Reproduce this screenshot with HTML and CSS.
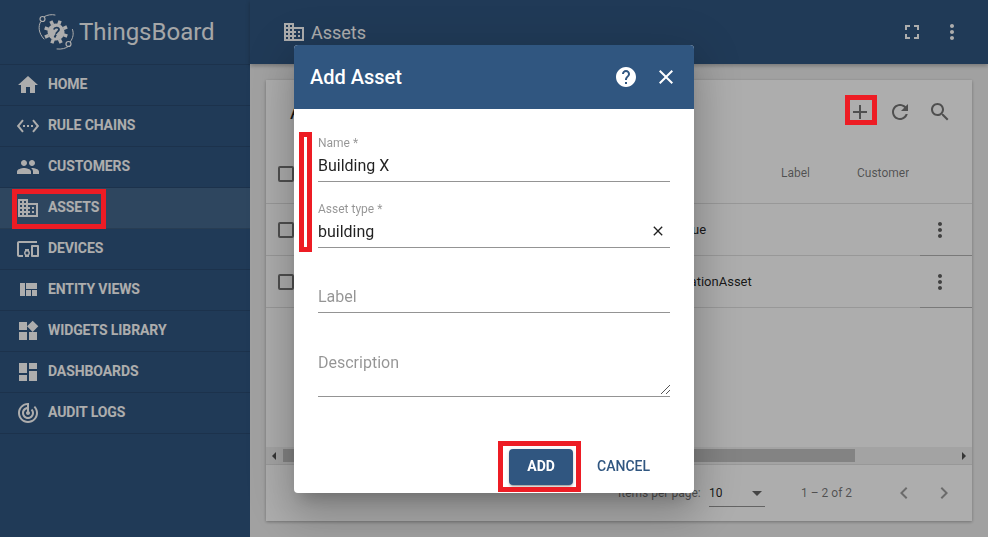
FILE: index.html
```html
<!DOCTYPE html>
<html lang="en">
<head>
<meta charset="utf-8">
<title>Assets - ThingsBoard</title>
<link rel="stylesheet" href="styles.css">
</head>
<body>
<svg class="sprite" aria-hidden="true">
  <symbol id="i-home" viewBox="0 0 24 24"><path d="M10 20v-6h4v6h5v-8h3L12 3 2 12h3v8z"/></symbol>
  <symbol id="i-rule" viewBox="0 0 24 24"><path d="M7.77 6.76L6.23 5.48.82 12l5.41 6.52 1.54-1.28L3.42 12l4.35-5.24zM7 13h2v-2H7v2zm10-2h-2v2h2v-2zm-6 2h2v-2h-2v2zm6.77-7.52l-1.54 1.28L20.58 12l-4.35 5.24 1.54 1.28L23.18 12l-5.41-6.52z"/></symbol>
  <symbol id="i-people" viewBox="0 0 24 24"><path d="M16 11c1.66 0 2.99-1.34 2.99-3S17.66 5 16 5c-1.66 0-3 1.34-3 3s1.34 3 3 3zm-8 0c1.66 0 2.99-1.34 2.99-3S9.66 5 8 5C6.34 5 5 6.34 5 8s1.34 3 3 3zm0 2c-2.33 0-7 1.17-7 3.5V19h14v-2.5c0-2.33-4.67-3.5-7-3.5zm8 0c-.29 0-.62.02-.97.05 1.16.84 1.97 1.97 1.97 3.45V19h6v-2.5c0-2.33-4.67-3.5-7-3.5z"/></symbol>
  <symbol id="i-domain" viewBox="0 0 24 24"><path d="M12 7V3H2v18h20V7H12zM6 19H4v-2h2v2zm0-4H4v-2h2v2zm0-4H4V9h2v2zm0-4H4V5h2v2zm4 12H8v-2h2v2zm0-4H8v-2h2v2zm0-4H8V9h2v2zm0-4H8V5h2v2zm10 12h-8v-2h2v-2h-2v-2h2v-2h-2V9h8v10zm-2-8h-2v2h2v-2zm0 4h-2v2h2v-2z"/></symbol>
  <symbol id="i-devices" viewBox="0 0 24 24"><path d="M3 6h18V4H3c-1.100 0-2 .9-2 2v12c0 1.100.9 2 2 2h4v-2H3V6zm10 6H9v1.780c-.61.55-1 1.330-1 2.220s.39 1.670 1 2.220V20h4v-1.780c.61-.55 1-1.340 1-2.220s-.39-1.670-1-2.220V12zm-2 5.500c-.83 0-1.500-.67-1.500-1.500s.67-1.500 1.500-1.500 1.500.67 1.500 1.500-.67 1.500-1.500 1.500zM22 8h-6c-.5 0-1 .5-1 1v10c0 .5.5 1 1 1h6c.5 0 1-.5 1-1V9c0-.5-.5-1-1-1zm-1 10h-4v-8h4v8z"/></symbol>
  <symbol id="i-quilt" viewBox="0 0 24 24"><path d="M10 18h5v-6h-5v6zm-6 0h5V5H4v13zm12 0h5v-6h-5v6zM10 5v6h11V5H10z"/></symbol>
  <symbol id="i-widgets" viewBox="0 0 24 24"><path d="M13 13v8h8v-8h-8zM3 21h8v-8H3v8zM3 3v8h8V3H3zm13.66-1.31L11 7.34 16.66 13l5.66-5.66-5.66-5.65z"/></symbol>
  <symbol id="i-dashboard" viewBox="0 0 24 24"><path d="M3 13h8V3H3v10zm0 8h8v-6H3v6zm10 0h8V11h-8v10zm0-18v6h8V3h-8z"/></symbol>
  <symbol id="i-track" viewBox="0 0 24 24"><path d="M19.07 4.93l-1.41 1.41C19.1 7.79 20 9.79 20 12c0 4.42-3.58 8-8 8s-8-3.58-8-8c0-4.08 3.05-7.44 7-7.93v2.02C8.16 6.57 6 9.03 6 12c0 3.31 2.69 6 6 6s6-2.69 6-6c0-1.66-.67-3.16-1.76-4.24l-1.41 1.41C15.55 9.9 16 10.9 16 12c0 2.21-1.79 4-4 4s-4-1.79-4-4c0-1.86 1.28-3.41 3-3.86v2.14c-.6.35-1 .98-1 1.72 0 1.1.9 2 2 2s2-.9 2-2c0-.74-.4-1.38-1-1.72V2h-1C6.48 2 2 6.48 2 12s4.48 10 10 10 10-4.48 10-10c0-2.76-1.12-5.26-2.93-7.07z"/></symbol>
  <symbol id="i-help" viewBox="0 0 24 24"><path d="M12 2C6.48 2 2 6.48 2 12s4.48 10 10 10 10-4.48 10-10S17.52 2 12 2zm1 17h-2v-2h2v2zm2.07-7.75l-.9.92C13.45 12.9 13 13.5 13 15h-2v-.5c0-1.1.45-2.1 1.17-2.83l1.24-1.26c.37-.36.59-.86.59-1.41 0-1.1-.9-2-2-2s-2 .9-2 2H8c0-2.21 1.79-4 4-4s4 1.79 4 4c0 .88-.36 1.68-.93 2.25z"/></symbol>
  <symbol id="i-close" viewBox="0 0 24 24"><path d="M19 6.41L17.59 5 12 10.59 6.41 5 5 6.41 10.59 12 5 17.59 6.41 19 12 13.41 17.59 19 19 17.59 13.41 12z"/></symbol>
  <symbol id="i-add" viewBox="0 0 24 24"><path d="M19 13h-6v6h-2v-6H5v-2h6V5h2v6h6v2z"/></symbol>
  <symbol id="i-refresh" viewBox="0 0 24 24"><path d="M17.65 6.35C16.2 4.9 14.21 4 12 4c-4.42 0-7.99 3.58-7.99 8s3.57 8 7.99 8c3.73 0 6.84-2.55 7.73-6h-2.08c-.82 2.33-3.04 4-5.65 4-3.31 0-6-2.69-6-6s2.69-6 6-6c1.66 0 3.14.69 4.22 1.78L13 11h7V4l-2.35 2.35z"/></symbol>
  <symbol id="i-search" viewBox="0 0 24 24"><path d="M15.5 14h-.79l-.28-.27C15.41 12.59 16 11.11 16 9.5 16 5.91 13.09 3 9.5 3S3 5.91 3 9.5 5.91 16 9.5 16c1.61 0 3.09-.59 4.23-1.57l.27.28v.79l5 4.99L20.49 19l-4.99-5zm-6 0C7.01 14 5 11.99 5 9.5S7.01 5 9.5 5 14 7.01 14 9.5 11.99 14 9.5 14z"/></symbol>
  <symbol id="i-more" viewBox="0 0 24 24"><path d="M12 8c1.1 0 2-.9 2-2s-.9-2-2-2-2 .9-2 2 .9 2 2 2zm0 2c-1.1 0-2 .9-2 2s.9 2 2 2 2-.9 2-2-.9-2-2-2zm0 6c-1.1 0-2 .9-2 2s.9 2 2 2 2-.9 2-2-.9-2-2-2z"/></symbol>
  <symbol id="i-full" viewBox="0 0 24 24"><path d="M7 14H5v5h5v-2H7v-3zm-2-4h2V7h3V5H5v5zm12 7h-3v2h5v-5h-2v3zM14 5v2h3v3h2V5h-5z"/></symbol>
  <symbol id="i-prev" viewBox="0 0 24 24"><path d="M15.41 7.41L14 6l-6 6 6 6 1.41-1.41L10.83 12z"/></symbol>
  <symbol id="i-next" viewBox="0 0 24 24"><path d="M10 6L8.59 7.41 13.17 12l-4.58 4.59L10 18l6-6z"/></symbol>
</svg>

<div class="app">
  <aside class="sidenav">
    <div class="brand">
      <svg class="brand-logo" viewBox="0 0 38 38">
        <g class="logo-lines">
          <path d="M6.500 3.500C9.500 1.800 13.500 1.200 17 2"/>
          <path d="M2.500 9C.2 13 .2 20 6 26"/>
          <path d="M31 33C28 35.500 23.500 36.500 19 36"/>
          <path d="M32.500 28.500C35 25 36 21 34.500 16.500"/>
        </g>
        <circle class="logo-node" cx="4.500" cy="6" r="2.500"/>
        <circle class="logo-node" cx="30.500" cy="31" r="2.500"/>
        <g class="logo-gear" transform="rotate(20 18 19)">
          <circle cx="18" cy="19" r="8.500"/>
          <path d="M16.300 7h3.400v4h-3.400zM16.300 27h3.400v4h-3.400zM6 17.300h4v3.400H6zM26 17.300h4v3.400h-4zM8.200 11.600l2.400-2.400 2.800 2.800-2.400 2.400zM22.600 26l2.400-2.400 2.800 2.800-2.400 2.400zM8.200 26.400l2.800-2.800 2.400 2.400-2.800 2.800zM22.600 12l2.800-2.800 2.400 2.400-2.800 2.800z"/>
        </g>
        <path class="logo-cut" d="M15.800 16.500c.8-2.400 5-2.500 5.200 0 .1 1.800-2.700 2.300-3 4.300M18 21.500l-1.500 3"/>
      </svg>
      <span class="brand-name">ThingsBoard</span>
    </div>
    <nav class="nav">
      <a class="nav-item"><svg class="nav-icon"><use href="#i-home"/></svg><span class="nav-text">Home</span></a>
      <a class="nav-item"><svg class="nav-icon"><use href="#i-rule"/></svg><span class="nav-text">Rule chains</span></a>
      <a class="nav-item"><svg class="nav-icon"><use href="#i-people"/></svg><span class="nav-text">Customers</span></a>
      <a class="nav-item is-active"><svg class="nav-icon"><use href="#i-domain"/></svg><span class="nav-text">Assets</span></a>
      <a class="nav-item"><svg class="nav-icon"><use href="#i-devices"/></svg><span class="nav-text">Devices</span></a>
      <a class="nav-item"><svg class="nav-icon"><use href="#i-quilt"/></svg><span class="nav-text">Entity views</span></a>
      <a class="nav-item"><svg class="nav-icon"><use href="#i-widgets"/></svg><span class="nav-text">Widgets library</span></a>
      <a class="nav-item"><svg class="nav-icon"><use href="#i-dashboard"/></svg><span class="nav-text">Dashboards</span></a>
      <a class="nav-item"><svg class="nav-icon"><use href="#i-track"/></svg><span class="nav-text">Audit logs</span></a>
    </nav>
  </aside>

  <div class="main">
    <header class="topbar">
      <svg class="topbar-icon"><use href="#i-domain"/></svg>
      <span class="topbar-title">Assets</span>
      <span class="spacer"></span>
      <span class="icon-btn"><svg class="icon-24"><use href="#i-full"/></svg></span>
      <span class="icon-btn"><svg class="icon-24"><use href="#i-more"/></svg></span>
    </header>

    <div class="content">
      <section class="card">
        <div class="card-toolbar">
          <span class="card-title">Assets</span>
          <span class="spacer"></span>
          <span class="icon-btn dark"><svg class="icon-24"><use href="#i-add"/></svg></span>
          <span class="icon-btn dark"><svg class="icon-24"><use href="#i-refresh"/></svg></span>
          <span class="icon-btn dark"><svg class="icon-24"><use href="#i-search"/></svg></span>
        </div>
        <div class="table">
          <div class="row row-head">
            <span class="check"></span>
            <span class="cell-main"></span>
            <span class="cell-label">Label</span>
            <span class="cell-customer">Customer</span>
          </div>
          <div class="row">
            <span class="check"></span>
            <span class="cell-main">Revenue</span>
            <span class="cell-actions"><svg class="icon-24"><use href="#i-more"/></svg></span>
          </div>
          <div class="row">
            <span class="check"></span>
            <span class="cell-main">SimulationAsset</span>
            <span class="cell-actions"><svg class="icon-24"><use href="#i-more"/></svg></span>
          </div>
        </div>
        <div class="scrollbar">
          <span class="arrow-left"></span>
          <span class="thumb"></span>
          <span class="spacer"></span>
          <span class="arrow-right"></span>
        </div>
        <div class="paginator">
          <span class="page-label">Items per page:</span>
          <span class="page-select">10<i class="caret"></i></span>
          <span class="page-range">1 – 2 of 2</span>
          <span class="page-btn"><svg class="icon-24"><use href="#i-prev"/></svg></span>
          <span class="page-btn"><svg class="icon-24"><use href="#i-next"/></svg></span>
        </div>
      </section>
    </div>
  </div>
</div>

<div class="backdrop"></div>

<div class="dialog">
  <header class="dialog-head">
    <h2 class="dialog-title">Add Asset</h2>
    <span class="spacer"></span>
    <span class="dialog-btn"><svg class="icon-24"><use href="#i-help"/></svg></span>
    <span class="dialog-btn"><svg class="icon-24"><use href="#i-close"/></svg></span>
  </header>
  <div class="dialog-body">
    <div class="field">
      <span class="field-label">Name *</span>
      <span class="field-value">Building X</span>
    </div>
    <div class="field">
      <span class="field-label">Asset type *</span>
      <span class="field-value">building<svg class="field-clear"><use href="#i-close"/></svg></span>
    </div>
    <div class="field">
      <span class="field-label"></span>
      <span class="field-value is-placeholder">Label</span>
    </div>
    <div class="field field-area">
      <span class="field-label"></span>
      <span class="field-value is-placeholder">Description</span>
      <svg class="resizer" viewBox="0 0 9 9"><path d="M0 9L9 0M5 9L9 5"/></svg>
    </div>
  </div>
  <footer class="dialog-actions">
    <button class="btn btn-primary" type="button">Add</button>
    <button class="btn btn-text" type="button">Cancel</button>
  </footer>
</div>

<div class="mark mark-nav"></div>
<div class="mark mark-add"></div>
<div class="mark mark-fields"></div>
<div class="mark mark-submit"></div>
</body>
</html>
```
FILE: styles.css
```css
* { box-sizing: border-box; }
html, body { height: 100%; }
body {
  margin: 0;
  overflow: hidden;
  font-family: Roboto, "Liberation Sans", sans-serif;
  color: #212121;
  background: #eee;
}
.sprite { position: absolute; width: 0; height: 0; }
svg { fill: currentColor; display: block; }
.spacer { flex: 1 1 auto; }
.icon-24 { width: 24px; height: 24px; }

.app { display: flex; height: 537px; }

/* sidenav */
.sidenav { width: 250px; flex: none; background: #305680; color: #fff; }
.brand {
  height: 65px;
  display: flex;
  align-items: center;
  padding-left: 38px;
  border-bottom: 1px solid rgba(0, 0, 0, .12);
}
.brand-logo { width: 38px; height: 38px; margin-right: 3px; }
.logo-lines { fill: none; stroke: #fff; stroke-width: 1; stroke-linecap: round; }
.logo-node { fill: none; stroke: #fff; stroke-width: 1.200; }
.logo-gear { fill: #fff; }
.logo-cut { fill: none; stroke: #305680; stroke-width: 1.800; }
.brand-name { font-size: 24px; font-weight: 400; opacity: .95; }
.nav-item {
  display: flex;
  align-items: center;
  height: 41px;
  padding-left: 16px;
  border-bottom: 1px solid rgba(0, 0, 0, .12);
  font-size: 14px;
  font-weight: 700;
  letter-spacing: -.1px;
  text-transform: uppercase;
}
.nav-item.is-active { background: rgba(255, 255, 255, .1); }
.nav-icon { width: 24px; height: 24px; margin-right: 8px; }
.nav-text { padding-bottom: 2px; }

/* main */
.main { flex: 1 1 auto; min-width: 0; display: flex; flex-direction: column; }
.topbar {
  position: relative;
  height: 64px;
  flex: none;
  display: flex;
  align-items: center;
  padding: 0 16px 0 32px;
  background: #305680;
  color: #fff;
  box-shadow: 0 2px 4px rgba(0, 0, 0, .25);
}
.topbar-icon { width: 24px; height: 24px; margin-right: 5px; }
.topbar-title { font-size: 18px; font-weight: 400; }
.icon-btn { width: 40px; height: 40px; display: flex; align-items: center; justify-content: center; }
.icon-btn.dark { color: #757575; }

.content { flex: 1 1 auto; min-height: 0; padding: 16px; background: #eee; }
.card {
  height: 441px;
  display: flex;
  flex-direction: column;
  background: #fff;
  box-shadow: 0 1px 3px rgba(0, 0, 0, .3);
}
.card-toolbar { height: 64px; flex: none; display: flex; align-items: center; padding: 0 12px 0 24px; }
.card-title { font-size: 20px; }

/* table */
.table { flex: 1 1 auto; min-height: 0; }
.row {
  display: flex;
  align-items: center;
  height: 52px;
  padding-left: 12px;
  border-bottom: 1px solid rgba(0, 0, 0, .12);
  font-size: 13px;
  color: rgba(0, 0, 0, .87);
}
.row-head { height: 60px; font-size: 12px; font-weight: 400; color: rgba(0, 0, 0, .54); }
.check { width: 16px; height: 16px; flex: none; border: 2px solid rgba(0, 0, 0, .54); border-radius: 2px; margin-right: 363px; }
.cell-main { width: 124px; flex: none; white-space: nowrap; }
.cell-label { width: 76px; flex: none; padding-bottom: 2px; }
.cell-customer { width: 52px; flex: none; padding-bottom: 2px; white-space: nowrap; overflow: hidden; }
.cell-actions {
  align-self: stretch;
  width: 52px;
  margin-left: auto;
  margin-bottom: -1px;
  padding-left: 8px;
  display: flex;
  align-items: center;
  color: #616161;
  border-bottom: 1px solid rgba(0, 0, 0, .2);
}
.scrollbar { height: 17px; flex: none; display: flex; align-items: center; padding: 0 6px 0 6px; background: #f1f1f1; }
.arrow-left { width: 0; height: 0; border: 4px solid transparent; border-right: 4px solid #505050; border-left: 0; margin-right: 7px; }
.thumb { width: 572px; height: 13px; background: #c1c1c1; }
.arrow-right { width: 0; height: 0; border: 4px solid transparent; border-left: 4px solid #505050; border-right: 0; }

.paginator {
  height: 57px;
  flex: none;
  display: flex;
  align-items: center;
  padding-left: 352px;
  border-top: 1px solid rgba(0, 0, 0, .12);
  font-size: 12px;
  color: rgba(0, 0, 0, .54);
}
.page-label { width: 91px; white-space: nowrap; }
.page-select {
  position: relative;
  width: 56px;
  height: 24px;
  margin-top: 3px;
  padding-top: 1px;
  line-height: 18px;
  color: rgba(0, 0, 0, .87);
  border-bottom: 1px solid rgba(0, 0, 0, .42);
}
.caret {
  position: absolute;
  right: 3px;
  top: 8px;
  border: 5px solid transparent;
  border-top-color: rgba(0, 0, 0, .6);
  border-bottom: 0;
}
.page-range { margin-left: 36px; width: 83px; white-space: nowrap; }
.page-btn { width: 40px; height: 40px; display: flex; align-items: center; justify-content: center; color: rgba(0, 0, 0, .38); }

/* overlay */
.backdrop { position: fixed; inset: 0; background: rgba(0, 0, 0, .32); }
.dialog {
  position: absolute;
  left: 294px;
  top: 45px;
  width: 400px;
  height: 448px;
  display: flex;
  flex-direction: column;
  background: #fff;
  border-radius: 4px;
  overflow: hidden;
  box-shadow: 0 11px 15px -7px rgba(0, 0, 0, .2), 0 24px 38px 3px rgba(0, 0, 0, .14), 0 9px 46px 8px rgba(0, 0, 0, .12);
}
.dialog-head {
  height: 64px;
  flex: none;
  display: flex;
  align-items: center;
  padding: 0 8px 0 16px;
  background: #305680;
  color: #fff;
}
.dialog-title { margin: 0; font-size: 20px; font-weight: 500; }
.dialog-btn { width: 40px; height: 40px; display: flex; align-items: center; justify-content: center; }
.dialog-body { flex: 1 1 auto; display: flex; flex-direction: column; gap: 16.5px; padding: 24px 24px 0; }
.field { position: relative; display: flex; flex-direction: column; padding-bottom: 4px; border-bottom: 1px solid #949494; }
.field-area { height: 67px; }
.field-label { height: 20px; font-size: 12px; line-height: 20px; color: rgba(0, 0, 0, .42); }
.field-value { position: relative; height: 24px; padding-top: 1px; font-size: 16px; line-height: 24px; color: rgba(0, 0, 0, .87); }
.is-placeholder { color: rgba(0, 0, 0, .42); }
.field-clear { position: absolute; right: 4px; top: 4px; width: 16px; height: 16px; }
.resizer { position: absolute; right: 0; bottom: 2px; width: 9px; height: 9px; fill: none; stroke: #555; stroke-width: 1; }
.dialog-actions { flex: none; display: flex; gap: 8px; padding: 0 28px 8px 0; justify-content: flex-end; }
.btn {
  height: 36px;
  padding: 0 16px 2px;
  border: 0;
  border-radius: 4px;
  font: 500 14px/34px Roboto, "Liberation Sans", sans-serif;
  text-transform: uppercase;
}
.btn-primary { width: 64px; background: #305680; color: #fff; box-shadow: 0 3px 1px -2px rgba(0, 0, 0, .2), 0 2px 2px 0 rgba(0, 0, 0, .14), 0 1px 5px 0 rgba(0, 0, 0, .12); font-weight: 700; }
.btn-text { background: transparent; color: #305680; }

/* red callouts */
.mark { position: absolute; border: 5px solid #ed1c24; }
.mark-nav { left: 12px; top: 189px; width: 94px; height: 40px; }
.mark-add { left: 845px; top: 95px; width: 32px; height: 30px; }
.mark-fields { left: 299px; top: 132px; width: 13px; height: 120px; }
.mark-submit { left: 498px; top: 441px; width: 83px; height: 51px; }
```
